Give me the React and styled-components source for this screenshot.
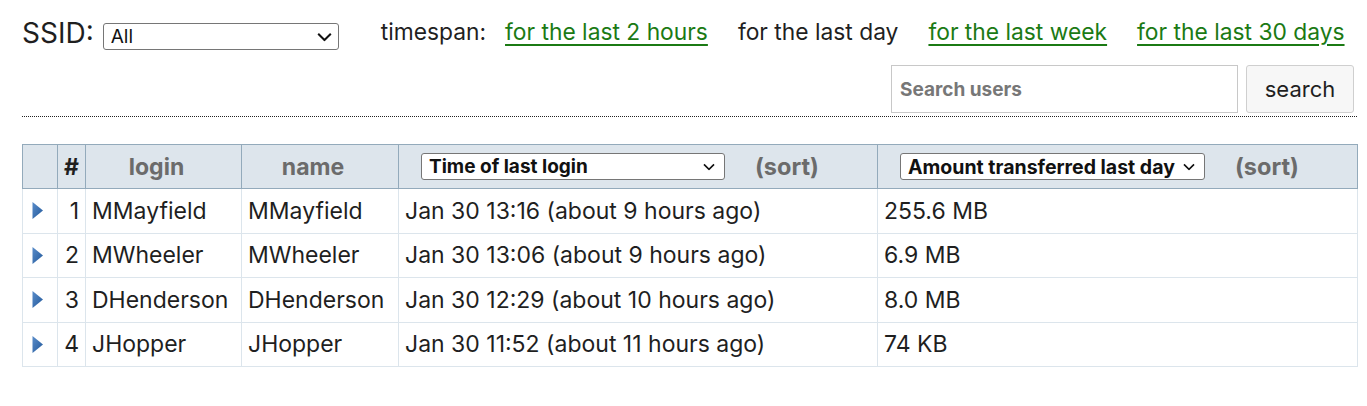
import React from "react";
import styled, { createGlobalStyle } from "styled-components";

const GlobalStyle = createGlobalStyle`
  body {
    margin: 0;
    background: #fff;
    font-family: Inter, "Noto Sans", sans-serif;
    color: #1f1f1f;
  }
`;

const Page = styled.div`
  padding: 17px 10px 0 22px;
`;

const TopBar = styled.div`
  display: flex;
  align-items: center;
  gap: 42px;
  height: 32px;
`;

const SsidLabel = styled.label`
  display: flex;
  align-items: center;
  gap: 9px;
  font-size: 28px;
`;

const SelectWrap = styled.span`
  position: relative;
  display: inline-flex;
  margin-top: ${(p) => p.$offset || 0}px;
  svg {
    position: absolute;
    right: ${(p) => p.$chevronRight || 10}px;
    top: 50%;
    transform: translateY(-50%);
    pointer-events: none;
  }
`;

const Select = styled.select`
  appearance: none;
  font-family: Inter, sans-serif;
  font-size: ${(p) => p.$size || 19}px;
  font-weight: ${(p) => (p.$bold ? 700 : 400)};
  color: #111;
  width: ${(p) => p.$width}px;
  height: 27px;
  border: 1px solid #767676;
  border-radius: 3px;
  background: #fff;
  padding: 0 28px 0 7px;
`;

const Chevron = ({ w = 12 }) => (
  <svg width={w} height={w * 0.6} viewBox="0 0 15 9">
    <path d="M1.2 1.2 L7.5 7.5 L13.8 1.2" fill="none" stroke="#111" strokeWidth="2" />
  </svg>
);

const Timespan = styled.div`
  display: flex;
  align-items: center;
  gap: 30px;
  font-size: 22.8px;
  margin-top: -3px;
`;

const TimespanLabel = styled.span`
  margin-right: -11px;
`;

const TimeLink = styled.a`
  color: #1b7a14;
  text-decoration: underline;
  text-underline-offset: 4px;
`;

const SearchRow = styled.div`
  display: flex;
  justify-content: flex-end;
  gap: 8px;
  margin-top: 16px;
  margin-right: 3px;
`;

const SearchInput = styled.input`
  width: 347px;
  height: 48px;
  box-sizing: border-box;
  border: 1px solid #c8c8c8;
  font-family: Inter, sans-serif;
  font-size: 19px;
  font-weight: 700;
  padding: 0 8px;
  &::placeholder {
    color: #777;
  }
`;

const SearchButton = styled.button`
  width: 108px;
  height: 48px;
  border: 1px solid #cfcfcf;
  border-radius: 3px;
  background: #f7f7f7;
  font-family: Inter, sans-serif;
  font-size: 22px;
  color: #1f1f1f;
`;

const Divider = styled.hr`
  border: 0;
  border-top: 1px dotted #222;
  margin: 3px 0 27px;
`;

const Table = styled.table`
  width: 1335px;
  border-collapse: collapse;
  table-layout: fixed;
  font-size: 23px;
`;

const Th = styled.th`
  background: #dde5ec;
  height: 43px;
  border: 1px solid #93aabb;
  color: ${(p) => (p.$dark ? "#1f1f1f" : "#6b6b6b")};
  font-weight: 700;
  text-align: center;
  padding: 0 ${(p) => p.$shift || 0}px 0 0;
`;

const HeadCell = styled.div`
  display: flex;
  align-items: center;
  gap: 30px;
  padding-left: 22px;
`;

const Sort = styled.span`
  color: #6b6b6b;
  font-weight: 700;
  font-size: 23.5px;
`;

const Row = styled.tr`
  height: 44.5px;
`;

const Td = styled.td`
  border: 1px solid #dce5ec;
  padding: 0 6px;
  text-align: ${(p) => p.$align || "left"};
  white-space: nowrap;
  color: #1f1f1f;
  svg {
    display: block;
    margin: 0 0 0 3px;
  }
`;

const Arrow = () => (
  <svg width="11" height="17" viewBox="0 0 11 17">
    <defs>
      <linearGradient id="ag" x1="0" y1="0" x2="1" y2="1">
        <stop offset="0" stopColor="#5a8dca" />
        <stop offset="1" stopColor="#22589a" />
      </linearGradient>
    </defs>
    <path d="M0.5 0 L11 8.5 L0.5 17 Z" fill="url(#ag)" />
  </svg>
);

const rows = [
  ["MMayfield", "Jan 30 13:16 (about 9 hours ago)", "255.6 MB"],
  ["MWheeler", "Jan 30 13:06 (about 9 hours ago)", "6.9 MB"],
  ["DHenderson", "Jan 30 12:29 (about 10 hours ago)", "8.0 MB"],
  ["JHopper", "Jan 30 11:52 (about 11 hours ago)", "74 KB"],
];

export default function App() {
  return (
    <Page>
      <GlobalStyle />
      <TopBar>
        <SsidLabel>
          SSID:
          <SelectWrap $offset={7} $chevronRight={7}>
            <Select $width={236}>
              <option>All</option>
            </Select>
            <Chevron w={15} />
          </SelectWrap>
        </SsidLabel>
        <Timespan>
          <TimespanLabel>timespan:</TimespanLabel>
          <TimeLink href="#">for the last 2 hours</TimeLink>
          <span>for the last day</span>
          <TimeLink href="#">for the last week</TimeLink>
          <TimeLink href="#">for the last 30 days</TimeLink>
        </Timespan>
      </TopBar>
      <SearchRow>
        <SearchInput placeholder="Search users" />
        <SearchButton>search</SearchButton>
      </SearchRow>
      <Divider />
      <Table>
        <colgroup>
          <col style={{ width: 35 }} />
          <col style={{ width: 28 }} />
          <col style={{ width: 156 }} />
          <col style={{ width: 157 }} />
          <col style={{ width: 479 }} />
          <col style={{ width: 480 }} />
        </colgroup>
        <thead>
          <tr>
            <Th />
            <Th $dark>#</Th>
            <Th $shift={14}>login</Th>
            <Th $shift={14}>name</Th>
            <Th>
              <HeadCell>
                <SelectWrap>
                  <Select $width={304} $bold>
                    <option>Time of last login</option>
                  </Select>
                  <Chevron />
                </SelectWrap>
                <Sort>(sort)</Sort>
              </HeadCell>
            </Th>
            <Th>
              <HeadCell>
                <SelectWrap>
                  <Select $width={305} $size={19.5} $bold>
                    <option>Amount transferred last day</option>
                  </Select>
                  <Chevron />
                </SelectWrap>
                <Sort>(sort)</Sort>
              </HeadCell>
            </Th>
          </tr>
        </thead>
        <tbody>
          {rows.map(([login, time, amount], i) => (
            <Row key={login}>
              <Td>
                <Arrow />
              </Td>
              <Td $align="right">{i + 1}</Td>
              <Td>{login}</Td>
              <Td>{login}</Td>
              <Td>{time}</Td>
              <Td>{amount}</Td>
            </Row>
          ))}
        </tbody>
      </Table>
    </Page>
  );
}
